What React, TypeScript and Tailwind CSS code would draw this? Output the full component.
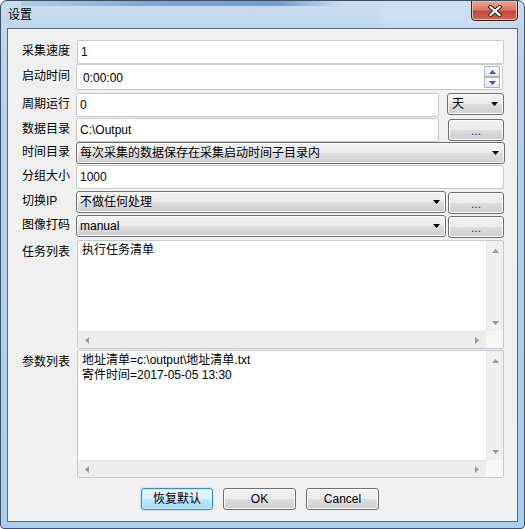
import React from "react";

const btnBg =
  "bg-[linear-gradient(to_bottom,#f2f2f2_0%,#ebebeb_50%,#dddddd_50%,#cfcfcf_100%)] shadow-[inset_0_0_0_1px_#fbfbfb]";

function TriDown({ color = "#000" }: { color?: string }) {
  return (
    <svg width="7" height="4" viewBox="0 0 7 4">
      <path d="M0 0H7L3.5 4Z" fill={color} />
    </svg>
  );
}

function TriUp({ color = "#000" }: { color?: string }) {
  return (
    <svg width="7" height="4" viewBox="0 0 7 4">
      <path d="M3.5 0L7 4H0Z" fill={color} />
    </svg>
  );
}

function TriLeft({ color = "#000" }: { color?: string }) {
  return (
    <svg width="4" height="7" viewBox="0 0 4 7">
      <path d="M4 0V7L0 3.5Z" fill={color} />
    </svg>
  );
}

function TriRight({ color = "#000" }: { color?: string }) {
  return (
    <svg width="4" height="7" viewBox="0 0 4 7">
      <path d="M0 0L4 3.5L0 7Z" fill={color} />
    </svg>
  );
}

function TextBox({ value, className = "" }: { value: string; className?: string }) {
  return (
    <div
      className={`h-full flex items-center bg-white border border-[#c6c9ce] rounded-[2px] pl-[3px] text-[12px] text-black ${className}`}
    >
      {value}
    </div>
  );
}

function Combo({ value, className = "" }: { value: string; className?: string }) {
  return (
    <div
      className={`h-full flex items-center justify-between rounded-[3px] border border-[#707070] pl-[3px] pr-[5px] text-[12px] text-black ${btnBg} ${className}`}
    >
      <span>{value}</span>
      <TriDown />
    </div>
  );
}

function DotsButton() {
  return (
    <div
      className={`h-full w-[56px] shrink-0 flex items-end justify-center pb-[3px] rounded-[3px] border border-[#707070] text-[12px] leading-none text-[#2b2b8c] ${btnBg}`}
    >
      ...
    </div>
  );
}

function ListBox({ lines, className = "" }: { lines: string[]; className?: string }) {
  return (
    <div className={`flex flex-col bg-white border border-[#c6c9ce] rounded-[2px] ${className}`}>
      <div className="flex flex-1 min-h-0">
        <div className="flex-1 pl-[4px] pt-[2px] text-[12px] leading-[15px] text-black">
          {lines.map((l) => (
            <div key={l}>{l}</div>
          ))}
        </div>
        <div className="w-[17px] flex flex-col items-center justify-between pt-[8px] pb-[6px] bg-[#efefef] border-l border-[#e6e6e6]">
          <TriUp color="#9a9a9a" />
          <TriDown color="#9a9a9a" />
        </div>
      </div>
      <div className="flex h-[17px]">
        <div className="flex-1 flex items-center justify-between pl-[7px] pr-[7px] bg-[#ededed] border-t border-[#e4e4e4]">
          <TriLeft color="#9a9a9a" />
          <TriRight color="#9a9a9a" />
        </div>
        <div className="w-[17px] bg-[#f6f6f6]" />
      </div>
    </div>
  );
}

function Row({
  label,
  top = false,
  className = "",
  children,
}: {
  label: string;
  top?: boolean;
  className?: string;
  children: React.ReactNode;
}) {
  return (
    <div className={`flex ${top ? "items-start" : "items-center"} ${className}`}>
      <div className={`w-[54px] shrink-0 text-[12px] text-black ${top ? "pt-[3px]" : "-mt-[2px]"}`}>
        {label}
      </div>
      <div className="flex-1 h-full flex gap-[8px]">{children}</div>
    </div>
  );
}

export default function App() {
  return (
    <div className="w-[525px] h-[529px] relative flex flex-col rounded-t-[7px] rounded-b-[4px] border border-[#3e5163] bg-[linear-gradient(to_bottom,#cadcef_0%,#b9d2ec_12%,#b3cfeb_40%,#a9cdee_100%)] font-['Liberation_Sans','Noto_Sans_CJK_SC',sans-serif] select-none overflow-hidden">
      {/* glass streak */}
      <div className="absolute top-0 left-[20px] w-[320px] h-[5px] bg-[linear-gradient(to_right,#a9c6e4_0%,#5f93c8_40%,#4a83bd_80%,transparent_100%)] opacity-70" />
      <div className="absolute top-[5px] left-[380px] w-[130px] h-[20px] bg-[#d4e4f4] opacity-60 blur-[4px]" />

      {/* Title bar */}
      <div className="relative h-[27px] shrink-0 flex items-center pl-[7px] text-[12px] text-black">
        设置
      </div>
      <div className="absolute -top-[1px] right-[6px] w-[47px] h-[21px] flex items-center justify-center rounded-b-[4px] border border-[#4f1d17] bg-[linear-gradient(to_bottom,#e9a99b_0%,#d7786a_45%,#c24a39_55%,#cf6a4c_100%)] shadow-[inset_0_0_0_1px_#f0b7a9]">
        <svg width="14" height="12" viewBox="0 0 14 12">
          <path d="M2.5 2L11.5 10M11.5 2L2.5 10" stroke="#3b2020" strokeWidth="4.2" strokeLinecap="square" />
          <path d="M2.5 2L11.5 10M11.5 2L2.5 10" stroke="#ffffff" strokeWidth="2.2" strokeLinecap="square" />
        </svg>
      </div>

      {/* Client */}
      <div className="relative flex-1 flex px-[6px] pb-[6px]">
        <div className="flex-1 flex flex-col border border-[#5b6b7a] bg-[#f0f0f0] pl-[14px] pr-[13px] pt-[11px]">
          <Row label="采集速度" className="h-[24px]">
            <TextBox value="1" className="flex-1 ml-[1px]" />
          </Row>
          <Row label="启动时间" className="h-[26px]">
            <div className="flex-1 h-full flex items-center bg-white border border-[#c6c9ce] rounded-[2px] pl-[6px] pr-[2px] text-[12px] text-black mr-[1px]">
              <span className="flex-1 pt-[2px]">0:00:00</span>
              <div className="flex flex-col">
                <div className="w-[16px] h-[11px] flex items-center justify-center border border-[#b5b5b5] bg-[linear-gradient(to_bottom,#fafafa,#e4e4e4)]">
                  <TriUp color="#4b5d8c" />
                </div>
                <div className="w-[16px] h-[11px] flex items-center justify-center border border-[#b5b5b5] bg-[linear-gradient(to_bottom,#fafafa,#e4e4e4)]">
                  <TriDown color="#4b5d8c" />
                </div>
              </div>
            </div>
          </Row>
          <Row label="周期运行" className="h-[24px] mt-[3px]">
            <TextBox value="0" className="flex-1" />
            <div className="w-[57px] h-[22px]">
              <Combo value="天" className="pl-[4px]" />
            </div>
          </Row>
          <Row label="数据目录" className="h-[24px] mt-[1px]">
            <TextBox value="C:\Output" className="flex-1" />
            <div className="h-[22px] mt-[1px] ml-[1px]">
              <DotsButton />
            </div>
          </Row>
          <Row label="时间目录" className="h-[22px]">
            <Combo value="每次采集的数据保存在采集启动时间子目录内" className="flex-1 -mr-[1px] pr-[4px]" />
          </Row>
          <Row label="分组大小" className="h-[24px] mt-[1px]">
            <TextBox value="1000" className="flex-1" />
          </Row>
          <Row label="切换IP" className="h-[22px] mt-[2px]">
            <div className="flex-1 flex gap-[2px] h-full">
              <Combo value="不做任何处理" className="flex-1" />
              <div className="h-[22px] mt-[1px]">
                <DotsButton />
              </div>
            </div>
          </Row>
          <Row label="图像打码" className="h-[22px] mt-[2px]">
            <div className="flex-1 flex gap-[2px] h-full">
              <Combo value="manual" className="flex-1" />
              <div className="h-[22px] mt-[1px]">
                <DotsButton />
              </div>
            </div>
          </Row>
          <Row label="任务列表" top className="h-[109px] mt-[3px]">
            <ListBox lines={["执行任务清单"]} className="flex-1 ml-[1px]" />
          </Row>
          <Row label="参数列表" top className="h-[128px] mt-[1px]">
            <ListBox
              lines={["地址清单=c:\\output\\地址清单.txt", "寄件时间=2017-05-05 13:30"]}
              className="flex-1 ml-[1px]"
            />
          </Row>

          {/* Buttons */}
          <div className="flex gap-[10px] pl-[119px] mt-[10px]">
            <div className="w-[72px] h-[22px] flex items-center justify-center rounded-[3px] border border-[#3c8fc4] bg-[linear-gradient(to_bottom,#eaf6fd_0%,#d9f0fc_50%,#bee6fd_50%,#a7d9f5_100%)] shadow-[inset_0_0_0_1px_#c6ecfc,0_0_2px_#6cc2ef] text-[12px] text-black">
              恢复默认
            </div>
            <div className={`w-[73px] h-[22px] flex items-center justify-center rounded-[3px] border border-[#707070] text-[12px] text-black ${btnBg}`}>
              OK
            </div>
            <div className={`w-[73px] h-[22px] flex items-center justify-center rounded-[3px] border border-[#707070] text-[12px] text-black ${btnBg}`}>
              Cancel
            </div>
          </div>
        </div>
      </div>
    </div>
  );
}
